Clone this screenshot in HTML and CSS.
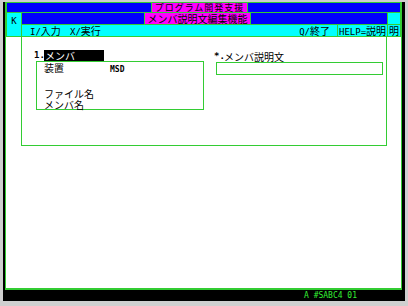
FILE: index.html
```html
<!DOCTYPE html>
<html lang="ja">
<head>
    <meta charset="UTF-8">
    <meta name="viewport" content="width=device-width, initial-scale=1.0">
    <title>メンバ説明文編集機能</title>
    <link rel="stylesheet" href="styles.css">
</head>
<body>

<div class="window">
    <div class="screen">
        <div class="header">
            <div class="bar1"><span class="label label-1">プログラム開発支援</span></div>
            <div class="kcell"><span class="hw">K</span></div>
            <div class="bar2"><span class="label label-2">メンバ説明文編集機能</span></div>
            <div class="corner"></div>
            <div class="menu">
                <span class="item"><span class="hw">I/</span>入力</span>
                <span class="item"><span class="hw">X/</span>実行</span>
                <span class="spacer"></span>
                <span class="item item-quit"><span class="hw">Q/</span>終了</span>
                <span class="help"><span class="hw">HELP=</span>説明</span>
            </div>
            <div class="corner corner-text">明</div>
        </div>

        <div class="body">
            <div class="panel">
                <div class="col col-left">
                    <div class="title"><span class="hw num">1.</span><span class="selected">メンバ</span></div>
                    <div class="box">
                        <div class="row"><span class="key">装置</span><span class="hw val">MSD</span></div>
                        <div class="row row-gap">ファイル名</div>
                        <div class="row">メンバ名</div>
                    </div>
                </div>
                <div class="col col-right">
                    <div class="title title-right"><span class="hw num">*.</span>メンバ説明文</div>
                    <div class="input"></div>
                </div>
            </div>
        </div>
    </div>
    <div class="status">A #SABC4 01</div>
</div>

</body>
</html>
```

FILE: styles.css
```css
body {
    margin: 0;
    background-color: #cfcfcf;
    font-family: "Noto Sans CJK JP", sans-serif;
    font-size: 10px;
    color: #000;
}
.window {
    margin: 2px 3px 5px 3px;
    height: 299px;
    background-color: #000;
    padding: 0 3px 0 2px;
    display: flex;
    flex-direction: column;
}
.screen {
    flex: 1;
    display: flex;
    flex-direction: column;
    background-color: #fff;
    border: 1px solid #3c3;
    border-bottom-width: 2px;
}
.hw {
    font-family: "DejaVu Sans Mono", monospace;
    font-size: 9px;
}

/* header rows */
.header {
    display: grid;
    grid-template-columns: 14px 1fr 12px;
    grid-template-rows: 9px 11px 11px;
    gap: 1px;
    padding: 0 1px 1px 1px;
    background-color: #3c3;
    line-height: 11px;
}
.bar1 {
    grid-column: 1 / 4;
    grid-row: 1;
    background-color: #00f;
    padding-left: 144px;
    display: flex;
}
.bar2 {
    grid-column: 2;
    grid-row: 2;
    background-color: #00f;
    padding-left: 122px;
    display: flex;
}
.label {
    background-color: #f0f;
    border-left: 1px solid #3c3;
    border-right: 1px solid #3c3;
    text-align: center;
    white-space: nowrap;
}
.label-1 {
    width: 95px;
    font-size: 9px;
    line-height: 9px;
    letter-spacing: 1px;
}
.label-2 {
    width: 105px;
}
.kcell {
    grid-column: 1;
    grid-row: 2 / 4;
    background-color: #0ff;
    text-align: center;
    padding-top: 1px;
}
.corner {
    grid-column: 3;
    grid-row: 2;
    background-color: #0ff;
}
.corner-text {
    grid-row: 3;
    text-align: center;
}
.menu {
    grid-column: 2;
    grid-row: 3;
    background-color: #0ff;
    display: flex;
    padding-left: 8px;
    white-space: nowrap;
}
.menu .item {
    width: 40px;
}
.menu .spacer {
    flex: 1;
}
.menu .item-quit {
    width: auto;
    margin-right: 7px;
}
.menu .help {
    width: 50px;
    box-sizing: border-box;
    border-left: 1px solid #3c3;
    padding-left: 1px;
}

/* main area */
.body {
    flex: 1;
}
.panel {
    margin-left: 15px;
    width: 366px;
    height: 109px;
    box-sizing: border-box;
    border: 1px solid #3c3;
    border-top: none;
    padding: 13px 0 0 12px;
    display: flex;
    gap: 10px;
}
.col-left {
    width: 170px;
}
.title {
    display: flex;
    height: 11px;
    line-height: 11px;
    white-space: nowrap;
}
.title .num {
    width: 10px;
    font-weight: bold;
}
.selected {
    width: 59px;
    padding-left: 1px;
    background-color: #000;
    color: #fff;
}
.box {
    margin-left: 2px;
    width: 168px;
    height: 49px;
    box-sizing: border-box;
    border: 1px solid #3c3;
    padding-left: 7px;
}
.box .row {
    line-height: 11px;
    height: 11px;
    white-space: nowrap;
}
.box .row-gap {
    margin-top: 15px;
}
.box .key {
    display: inline-block;
    width: 66px;
}
.box .val {
    font-weight: bold;
    font-size: 8px;
}
.col-right {
    width: 169px;
}
.title-right {
    height: 11px;
    padding-top: 1px;
}
.input {
    margin-left: 2px;
    width: 167px;
    height: 13px;
    box-sizing: border-box;
    border: 1px solid #3c3;
}

/* status line */
.status {
    height: 11px;
    line-height: 11px;
    padding-left: 299px;
    font-family: "DejaVu Sans Mono", monospace;
    font-size: 8px;
    color: #3e3;
    white-space: nowrap;
}
```
